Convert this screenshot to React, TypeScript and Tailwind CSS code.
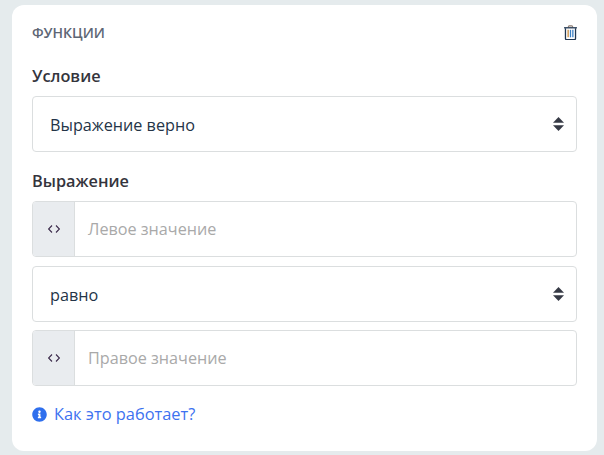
import { FaInfoCircle } from "react-icons/fa"

function CodeInput({ placeholder }: { placeholder: string }) {
  return (
    <div className="flex h-14 rounded border border-[#dbdedf] bg-white overflow-hidden">
      <div className="flex w-[42px] items-center justify-center border-r border-[#dbdedf] bg-[#e9ecef] text-[#3b2a4a]">
        <svg width="14" height="14" viewBox="0 0 14 14" fill="none" stroke="currentColor" strokeWidth="1.1">
          <path d="M5 3.5 1.6 7 5 10.5" />
          <path d="M9 3.5 12.4 7 9 10.5" />
        </svg>
      </div>
      <div className="flex items-center pl-[13px] text-[16.2px] text-[#a9a9a9]">{placeholder}</div>
    </div>
  )
}

function SelectBox({ value }: { value: string }) {
  return (
    <div className="flex h-14 items-center justify-between rounded border border-[#dbdedf] bg-white pl-[17px] pr-[12px] text-[16.2px] text-[#243447]">
      <span className="pt-[2px]">{value}</span>
      <svg width="11" height="14" viewBox="0 0 11 14" fill="#363a45">
        <path d="M5.5 0 11 5.7H0Z" />
        <path d="M5.5 14 0 8.3h11Z" />
      </svg>
    </div>
  )
}

export default function App() {
  return (
    <div className="h-[455px] w-[604px] overflow-hidden bg-[#e5ebed] pl-3 pr-[7px] pt-[5px] font-['Open_Sans','Noto_Sans',sans-serif]">
      <div className="h-[446px] rounded-xl bg-white px-5 pt-[17px]">
        <div className="flex h-5 items-center justify-between">
          <span className="text-[14px] font-semibold text-[#5d6675]">ФУНКЦИИ</span>
          <svg width="13" height="15" viewBox="0 0 12 14" fill="none">
            <path d="M3.8 2.2 4.6.8h2.8l.8 1.4" stroke="#8a7a70" strokeWidth="1" />
            <path d="M0 2.6h12" stroke="#1f3550" strokeWidth="1.2" />
            <path d="M1.3 3v9.6c0 .6.4 1 1 1h7.4c.6 0 1-.4 1-1V3" stroke="#1f3550" strokeWidth="1.2" />
            <path d="M3.8 4.5v7" stroke="#c98a3a" strokeWidth="1.2" />
            <path d="M6 4.5v7" stroke="#3b7fc4" strokeWidth="1.2" />
            <path d="M8.2 4.5v7" stroke="#3b7fc4" strokeWidth="1.2" />
          </svg>
        </div>
        <div className="mt-[22px] text-[16.3px] leading-6 font-semibold text-[#34343c]">Условие</div>
        <div className="mt-2">
          <SelectBox value="Выражение верно" />
        </div>
        <div className="mt-[17px] text-[16.3px] leading-6 font-semibold text-[#34343c]">Выражение</div>
        <div className="mt-2 flex flex-col">
          <CodeInput placeholder="Левое значение" />
          <div className="mt-[9px] mb-2">
            <SelectBox value="равно" />
          </div>
          <CodeInput placeholder="Правое значение" />
        </div>
        <div className="mt-4 flex items-center gap-[7px] text-[16.4px] leading-6 text-[#3d72f0]">
          <FaInfoCircle size={15} color="#2f6fed" />
          <span>Как это работает?</span>
        </div>
      </div>
    </div>
  )
}
